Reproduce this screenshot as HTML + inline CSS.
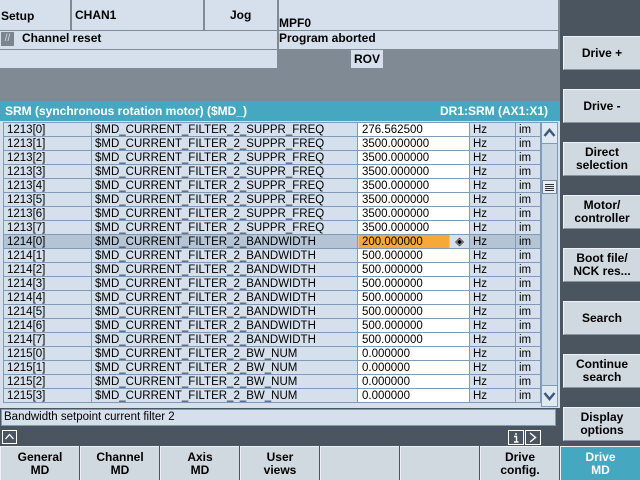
<!DOCTYPE html><html><head><style>
*{margin:0;padding:0;box-sizing:border-box}
body{width:640px;height:480px;background:#4a5560;font-family:"Liberation Sans",sans-serif;font-size:12px;position:relative;overflow:hidden;color:#000}
.a{position:absolute}
.lt{background:#d6e0ec}
.b{font-weight:bold}
.sk{position:absolute;left:563px;width:77px;height:34px;background:#d0d8e0;border-top:1px solid #eef2f6;border-left:1px solid #eef2f6;border-bottom:1px solid #8a949e;font-weight:bold;font-size:12px;text-align:center;display:flex;align-items:center;justify-content:center;line-height:13px}
.hk{position:absolute;top:446px;width:79px;height:34px;background:#d0d8e0;border-top:1px solid #eef2f6;border-left:1px solid #eef2f6;font-weight:bold;font-size:12px;text-align:center;display:flex;align-items:center;justify-content:center;line-height:13px}
table{border-collapse:collapse;position:absolute;left:3px;top:122px;font-size:11.5px}
td{height:14px;border:1px solid #7f9bb8;padding:0 3px;line-height:12px;background:#d6e0ec;white-space:nowrap}
td.v{background:#fff;padding-left:4px}
tr.s td{background:#b4c4d4}
</style></head><body>
<div class="a" style="left:0;top:0;width:560px;height:101px;background:#808a94"></div>
<div class="a lt b" style="left:0;top:0;width:70px;height:30px;padding:9px 0 0 1px">Setup</div>
<div class="a lt b" style="left:72px;top:0;width:131px;height:30px;padding:8px 0 0 3px">CHAN1</div>
<div class="a lt b" style="left:205px;top:0;width:72px;height:30px;padding:8px 0 0 25px">Jog</div>
<div class="a lt b" style="left:279px;top:0;width:279px;height:30px;padding:16px 0 0 0">MPF0</div>
<div class="a lt b" style="left:0;top:31px;width:277px;height:18px;padding:0 0 0 22px;line-height:15px">Channel reset</div>
<div class="a" style="left:1px;top:32px;width:13px;height:14px;background:#7a8590;color:#ddd;font-size:10px;line-height:14px;text-align:center">//</div>
<div class="a lt b" style="left:279px;top:31px;width:279px;height:18px;line-height:15px">Program aborted</div>
<div class="a lt" style="left:0;top:50px;width:277px;height:18px"></div>
<div class="a lt b" style="left:351px;top:50px;width:32px;height:18px;text-align:center;line-height:18px">ROV</div>
<div class="a b" style="left:0;top:101px;width:560px;height:20px;background:#45a8c0;color:#fff;padding:3px 0 0 5px">SRM (synchronous rotation motor) ($MD_)<span style="position:absolute;right:12px">DR1:SRM (AX1:X1)</span></div>
<div class="a" style="left:0;top:121px;width:560px;height:287px;background:#d6e0ec"></div>
<table>
<colgroup><col style="width:88px"><col style="width:266px"><col style="width:112px"><col style="width:46px"><col style="width:25px"></colgroup>
<tr><td>1213[0]</td><td>$MD_CURRENT_FILTER_2_SUPPR_FREQ</td><td class="v">276.562500</td><td>Hz</td><td>im</td></tr>
<tr><td>1213[1]</td><td>$MD_CURRENT_FILTER_2_SUPPR_FREQ</td><td class="v">3500.000000</td><td>Hz</td><td>im</td></tr>
<tr><td>1213[2]</td><td>$MD_CURRENT_FILTER_2_SUPPR_FREQ</td><td class="v">3500.000000</td><td>Hz</td><td>im</td></tr>
<tr><td>1213[3]</td><td>$MD_CURRENT_FILTER_2_SUPPR_FREQ</td><td class="v">3500.000000</td><td>Hz</td><td>im</td></tr>
<tr><td>1213[4]</td><td>$MD_CURRENT_FILTER_2_SUPPR_FREQ</td><td class="v">3500.000000</td><td>Hz</td><td>im</td></tr>
<tr><td>1213[5]</td><td>$MD_CURRENT_FILTER_2_SUPPR_FREQ</td><td class="v">3500.000000</td><td>Hz</td><td>im</td></tr>
<tr><td>1213[6]</td><td>$MD_CURRENT_FILTER_2_SUPPR_FREQ</td><td class="v">3500.000000</td><td>Hz</td><td>im</td></tr>
<tr><td>1213[7]</td><td>$MD_CURRENT_FILTER_2_SUPPR_FREQ</td><td class="v">3500.000000</td><td>Hz</td><td>im</td></tr>
<tr class="s"><td>1214[0]</td><td>$MD_CURRENT_FILTER_2_BANDWIDTH</td><td class="v" style="background:linear-gradient(90deg,#f8a838 82%,#d6e0ec 82%)">200.000000<span style="float:right;margin-right:2px">◈</span></td><td>Hz</td><td>im</td></tr>
<tr><td>1214[1]</td><td>$MD_CURRENT_FILTER_2_BANDWIDTH</td><td class="v">500.000000</td><td>Hz</td><td>im</td></tr>
<tr><td>1214[2]</td><td>$MD_CURRENT_FILTER_2_BANDWIDTH</td><td class="v">500.000000</td><td>Hz</td><td>im</td></tr>
<tr><td>1214[3]</td><td>$MD_CURRENT_FILTER_2_BANDWIDTH</td><td class="v">500.000000</td><td>Hz</td><td>im</td></tr>
<tr><td>1214[4]</td><td>$MD_CURRENT_FILTER_2_BANDWIDTH</td><td class="v">500.000000</td><td>Hz</td><td>im</td></tr>
<tr><td>1214[5]</td><td>$MD_CURRENT_FILTER_2_BANDWIDTH</td><td class="v">500.000000</td><td>Hz</td><td>im</td></tr>
<tr><td>1214[6]</td><td>$MD_CURRENT_FILTER_2_BANDWIDTH</td><td class="v">500.000000</td><td>Hz</td><td>im</td></tr>
<tr><td>1214[7]</td><td>$MD_CURRENT_FILTER_2_BANDWIDTH</td><td class="v">500.000000</td><td>Hz</td><td>im</td></tr>
<tr><td>1215[0]</td><td>$MD_CURRENT_FILTER_2_BW_NUM</td><td class="v">0.000000</td><td>Hz</td><td>im</td></tr>
<tr><td>1215[1]</td><td>$MD_CURRENT_FILTER_2_BW_NUM</td><td class="v">0.000000</td><td>Hz</td><td>im</td></tr>
<tr><td>1215[2]</td><td>$MD_CURRENT_FILTER_2_BW_NUM</td><td class="v">0.000000</td><td>Hz</td><td>im</td></tr>
<tr><td>1215[3]</td><td>$MD_CURRENT_FILTER_2_BW_NUM</td><td class="v">0.000000</td><td>Hz</td><td>im</td></tr>
</table>
<div class="a" style="left:541px;top:122px;width:17px;height:285px;background:#c8d4e2;border:1px solid #7f9bb8"></div>
<svg class="a" style="left:541px;top:122px" width="17" height="22"><rect x="0.5" y="0.5" width="16" height="21" fill="#e0e8f0" stroke="#7f9bb8"/><path d="M3.5 14 L8.5 8 L13.5 14" fill="none" stroke="#3a5a80" stroke-width="2.5"/></svg>
<svg class="a" style="left:541px;top:385px" width="17" height="22"><rect x="0.5" y="0.5" width="16" height="21" fill="#e0e8f0" stroke="#7f9bb8"/><path d="M3.5 8 L8.5 14 L13.5 8" fill="none" stroke="#3a5a80" stroke-width="2.5"/></svg>
<svg class="a" style="left:542px;top:180px" width="15" height="14"><rect x="0.5" y="0.5" width="14" height="13" fill="#e8eef4" stroke="#7a8a9a"/><path d="M3 4.5H12M3 6.5H12M3 8.5H12M3 10.5H12" stroke="#333"/></svg>
<div class="a" style="left:1px;top:409px;width:555px;height:17px;background:#d6e0ec;border:1px solid #7f9bb8;font-size:11.5px;padding-left:2px;line-height:15px">Bandwidth setpoint current filter 2</div>
<svg class="a" style="left:2px;top:430px" width="15" height="14"><rect x="0.5" y="0.5" width="14" height="13" fill="none" stroke="#fff"/><path d="M3.5 9 L7.5 4.5 L11.5 9" fill="none" stroke="#fff" stroke-width="1.3"/></svg>
<svg class="a" style="left:508px;top:430px" width="34" height="15"><rect x="0.5" y="0.5" width="15" height="14" fill="none" stroke="#fff"/><path d="M8 3V5M6 6.5H8.5V12M6 12H10.5" fill="none" stroke="#fff" stroke-width="1.4"/><rect x="17.5" y="0.5" width="15" height="14" fill="none" stroke="#fff"/><path d="M22 3 L27.5 7.5 L22 12" fill="none" stroke="#fff" stroke-width="1.4"/></svg>
<div class="sk" style="top:36px">Drive +</div>
<div class="sk" style="top:89px">Drive -</div>
<div class="sk" style="top:142px">Direct<br>selection</div>
<div class="sk" style="top:195px">Motor/<br>controller</div>
<div class="sk" style="top:248px">Boot file/<br>NCK res...</div>
<div class="sk" style="top:301px">Search</div>
<div class="sk" style="top:354px">Continue<br>search</div>
<div class="sk" style="top:407px">Display<br>options</div>
<div class="hk" style="left:0">General<br>MD</div>
<div class="hk" style="left:80px">Channel<br>MD</div>
<div class="hk" style="left:160px">Axis<br>MD</div>
<div class="hk" style="left:240px">User<br>views</div>
<div class="hk" style="left:320px"></div>
<div class="hk" style="left:400px"></div>
<div class="hk" style="left:480px">Drive<br>config.</div>
<div class="hk" style="left:560px;width:80px;background:#45a8c0;color:#fff">Drive<br>MD</div>
</body></html>
